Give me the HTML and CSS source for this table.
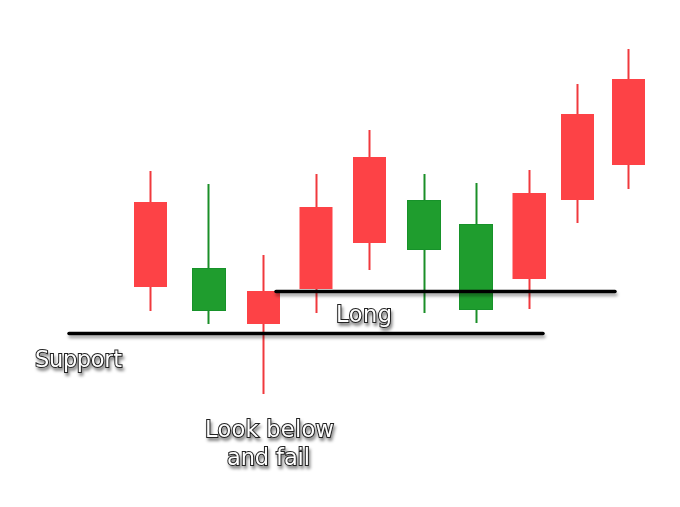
FILE: index.html
```html
<!DOCTYPE html>
<html>
<head>
<meta charset="utf-8">
<link rel="stylesheet" href="styles.css">
</head>
<body>
<svg class="chart" width="680" height="507" viewBox="0 0 680 507" xmlns="http://www.w3.org/2000/svg">
  <defs>
    <filter id="lineShadow" filterUnits="userSpaceOnUse" x="0" y="0" width="680" height="507">
      <feDropShadow dx="1" dy="3" stdDeviation="1.6" flood-color="#000" flood-opacity="0.35"/>
    </filter>
    <filter id="textShadow" filterUnits="userSpaceOnUse" x="0" y="0" width="680" height="507">
      <feDropShadow dx="1.5" dy="3" stdDeviation="1.8" flood-color="#000" flood-opacity="0.45"/>
    </filter>
  </defs>

  <!-- candles -->
  <g class="red">
    <line class="wick" x1="150.5" y1="171" x2="150.5" y2="311"/>
    <rect class="body" x="134" y="202" width="33" height="85"/>
  </g>
  <g class="green">
    <line class="wick" x1="208.5" y1="184" x2="208.5" y2="324"/>
    <rect class="body" x="192.5" y="268.5" width="33" height="42"/>
  </g>
  <g class="red">
    <line class="wick" x1="263.5" y1="255" x2="263.5" y2="394"/>
    <rect class="body" x="247" y="291" width="33" height="33"/>
  </g>
  <g class="red">
    <line class="wick" x1="316.5" y1="174" x2="316.5" y2="313"/>
    <rect class="body" x="299.5" y="207" width="33" height="82"/>
  </g>
  <g class="red">
    <line class="wick" x1="369.5" y1="130" x2="369.5" y2="270"/>
    <rect class="body" x="353" y="157" width="33" height="86"/>
  </g>
  <g class="green">
    <line class="wick" x1="424.5" y1="174" x2="424.5" y2="313"/>
    <rect class="body" x="407.5" y="200.5" width="33" height="49"/>
  </g>
  <g class="green">
    <line class="wick" x1="476.5" y1="183" x2="476.5" y2="323"/>
    <rect class="body" x="459.5" y="224.5" width="33" height="85"/>
  </g>
  <g class="red">
    <line class="wick" x1="529.5" y1="170" x2="529.5" y2="309"/>
    <rect class="body" x="512.5" y="193" width="33.5" height="86"/>
  </g>
  <g class="red">
    <line class="wick" x1="577.5" y1="84" x2="577.5" y2="223"/>
    <rect class="body" x="561" y="114" width="33" height="86"/>
  </g>
  <g class="red">
    <line class="wick" x1="628.5" y1="49" x2="628.5" y2="189"/>
    <rect class="body" x="612" y="79" width="33" height="86"/>
  </g>

  <!-- levels -->
  <line class="level" x1="276" y1="291.5" x2="615" y2="291.5" filter="url(#lineShadow)"/>
  <line class="level" x1="69" y1="333.5" x2="543" y2="333.5" filter="url(#lineShadow)"/>

  <!-- labels -->
  <g class="labels" filter="url(#textShadow)">
    <text class="label" x="35" y="367" textLength="87">Support</text>
    <text class="label" x="336" y="322" textLength="56">Long</text>
    <text class="label" x="205" y="437" textLength="129">Look below</text>
    <text class="label" x="227" y="465" textLength="83">and fail</text>
  </g>
</svg>
</body>
</html>
```

FILE: styles.css
```css
html, body {
  margin: 0;
  padding: 0;
  background: #ffffff;
}

.chart {
  display: block;
}

.wick {
  stroke-width: 2;
}

.red .wick {
  stroke: #f0393d;
}

.red .body {
  fill: #fd4246;
}

.green .wick {
  stroke: #1a8f28;
}

.green .body {
  fill: #1f9d2e;
  stroke: #17922a;
  stroke-width: 1;
}

.level {
  stroke: #000000;
  stroke-width: 3.5;
  stroke-linecap: round;
}

.label {
  font-family: "DejaVu Sans", "Verdana", sans-serif;
  font-size: 22.5px;
  fill: #ffffff;
  stroke: #222222;
  stroke-width: 2;
  paint-order: stroke fill;
  letter-spacing: 0;
}
```
